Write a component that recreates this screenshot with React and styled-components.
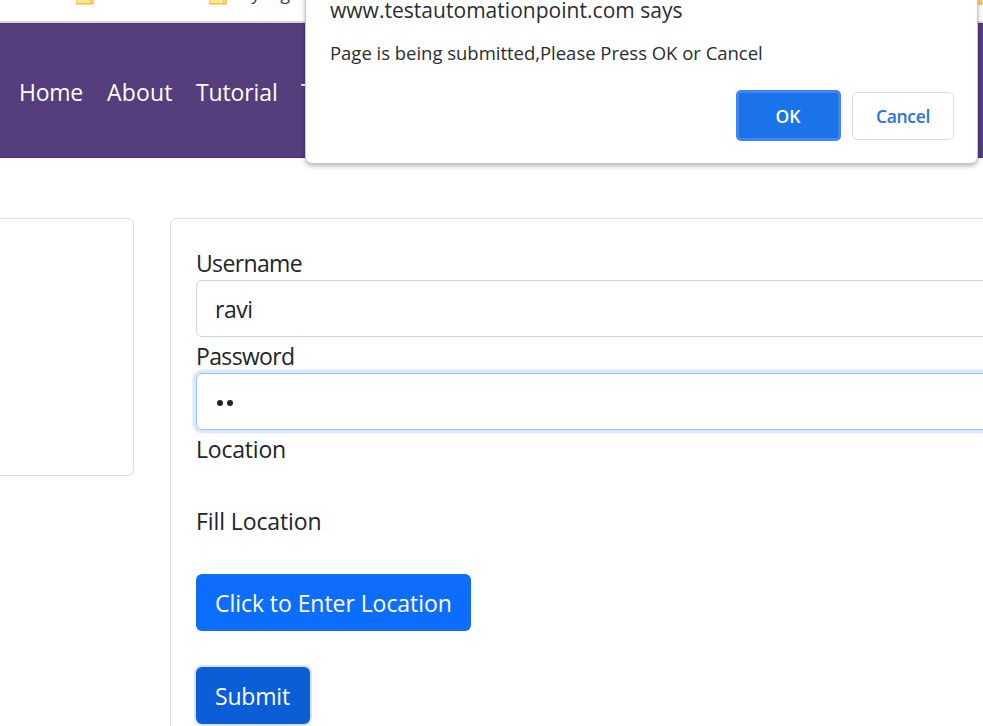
import React from "react";
import styled, { createGlobalStyle } from "styled-components";

const GlobalStyle = createGlobalStyle`
  *, *::before, *::after { box-sizing: border-box; }
  body {
    margin: 0;
    overflow: hidden;
    background: #fff;
    color: #212529;
    font: 400 23px/36px "Open Sans", "Noto Sans", sans-serif;
    font-variant-ligatures: none;
  }
`;

const Screen = styled.div`
  position: relative;
  width: 983px;
  height: 726px;
  overflow: hidden;
`;

const BookmarksBar = styled.div`
  display: flex;
  align-items: flex-start;
  height: 23px;
  padding-left: 76px;
  overflow: hidden;
  border-bottom: 2px solid #dadadc;
`;

const Folder = styled.svg`
  flex: none;
  width: 18px;
  height: 5px;
  margin-right: ${(p) => p.$gap || 0}px;
`;

const BookmarkLabel = styled.span`
  width: 743px;
  margin-top: -18px;
  font-size: 18px;
  line-height: 22px;
  color: #3c4043;
`;

const Navbar = styled.nav`
  display: flex;
  align-items: center;
  height: 135px;
  padding: 3px 0 0 19px;
  background: #563d7c;
  border-top: 1px solid #4c3570;
  border-bottom: 1px solid #493069;
`;

const NavLink = styled.a`
  flex: none;
  width: ${(p) => p.$width}px;
  padding-bottom: 1px;
  color: #fff;
  letter-spacing: ${(p) => p.$track || 0}px;
`;

const Content = styled.main`
  display: flex;
  align-items: flex-start;
  gap: 36px;
  padding-top: 60px;
`;

const SideCard = styled.aside`
  flex: none;
  width: 142px;
  height: 258px;
  margin-left: -8px;
  border: 1px solid #dfdfdf;
  border-radius: 6px;
`;

const FormCard = styled.form`
  display: flex;
  flex: none;
  flex-direction: column;
  align-items: flex-start;
  width: 900px;
  height: 600px;
  padding: 25px 25px 0;
  border: 1px solid #dfdfdf;
  border-radius: 6px;
`;

const Label = styled.label`
  height: 36px;
  margin-bottom: ${(p) => p.$below || 0}px;
  padding-top: 1px;
  letter-spacing: ${(p) => p.$track || 0}px;
`;

const Field = styled.div`
  display: flex;
  align-items: center;
  width: 100%;
  height: 57px;
  padding: 1px 18px 0;
  letter-spacing: ${(p) => p.$track || 0}px;
  border: 1px solid ${(p) => (p.$focused ? "#9fc0f2" : "#ced4da")};
  border-radius: 6px;
  box-shadow: ${(p) => (p.$focused ? "0 0 0 3px #dbe9ff, 0 0 0 4px #edf4ff" : "none")};
`;

const PasswordDots = styled.svg`
  width: 20px;
  height: 10px;
  margin-top: 1px;
  fill: #212529;
`;

const Button = styled.button`
  width: ${(p) => p.$width}px;
  height: 57px;
  margin-bottom: 36px;
  padding: 1px 0 0 19px;
  border: 0;
  border-radius: 6px;
  background: ${(p) => (p.$active ? "#0b5ed7" : "#0d6efd")};
  box-shadow: ${(p) => (p.$active ? "0 0 0 2px #d5e4fb" : "none")};
  color: #fff;
  font: inherit;
  text-align: left;
  white-space: nowrap;
  letter-spacing: ${(p) => p.$track || 0}px;
`;

const Dialog = styled.section`
  position: absolute;
  top: -20px;
  left: 305px;
  width: 673px;
  height: 184px;
  padding: 15px 24px 0;
  background: #fff;
  border: 1px solid #c6c8c9;
  border-radius: 7px;
  box-shadow: 0 2px 5px rgba(0, 0, 0, 0.28);
  color: #2b2d30;
`;

const DialogTitle = styled.h1`
  margin: 0;
  font-size: 21px;
  font-weight: 400;
  line-height: 28px;
  white-space: nowrap;
  letter-spacing: 0.03px;
`;

const DialogMessage = styled.p`
  margin: 15px 0 0;
  font-size: 18.5px;
  line-height: 28px;
  white-space: nowrap;
  letter-spacing: -0.02px;
`;

const DialogActions = styled.div`
  display: flex;
  align-items: center;
  justify-content: flex-end;
  gap: 11px;
  margin-top: 23px;
  margin-right: -1px;
`;

const DialogButton = styled.button`
  width: ${(p) => (p.$primary ? 105 : 102)}px;
  height: ${(p) => (p.$primary ? 51 : 48)}px;
  padding: ${(p) => (p.$primary ? "1px 1px 0 0" : "1px 0 0")};
  border: ${(p) => (p.$primary ? "3px solid #4285f4" : "1px solid #dadce0")};
  border-radius: 5px;
  background: ${(p) => (p.$primary ? "#1a73e8" : "#fff")};
  color: ${(p) => (p.$primary ? "#fff" : "#2a70e3")};
  font: 600 17.5px/24px "Open Sans", "Noto Sans", sans-serif;
  letter-spacing: ${(p) => p.$track || 0}px;
`;

function FolderIcon({ gap }) {
  return (
    <Folder $gap={gap} viewBox="0 0 18 5">
      <path d="M0 0H18V4.2Q18 5 17 5H1Q0 5 0 4.2Z" fill="#fbdc74" />
      <path d="M2 0H14V3H2Z" fill="#ffe694" />
      <path d="M0 3.5H18M14.5 0V3.5M16.5 0V3.5" stroke="#edc443" strokeWidth="0.9" />
    </Folder>
  );
}

export default function App() {
  return (
    <>
      <GlobalStyle />
      <Screen>
        <BookmarksBar>
          <FolderIcon gap={115} />
          <FolderIcon gap={8} />
          <BookmarkLabel>My log</BookmarkLabel>
          <FolderIcon />
        </BookmarksBar>
        <Navbar>
          <NavLink $width={88} $track={-0.25}>Home</NavLink>
          <NavLink $width={89} $track={0.2}>About</NavLink>
          <NavLink $width={105} $track={-0.12}>Tutorial</NavLink>
          <NavLink $width={90}>Training</NavLink>
        </Navbar>
        <Content>
          <SideCard />
          <FormCard>
            <Label $track={-0.65}>Username</Label>
            <Field $track={-0.5}>ravi</Field>
            <Label $track={-0.65}>Password</Label>
            <Field $focused>
              <PasswordDots viewBox="0 0 20 10">
                <circle cx="5" cy="5" r="3" />
                <circle cx="15" cy="5" r="3" />
              </PasswordDots>
            </Field>
            <Label $below={36} $track={-0.2}>Location</Label>
            <Label $below={36} $track={-0.1}>Fill Location</Label>
            <Button type="button" $width={275} $track={-0.06}>Click to Enter Location</Button>
            <Button type="button" $width={114} $track={-0.2} $active>Submit</Button>
          </FormCard>
        </Content>
        <Dialog>
          <DialogTitle>www.testautomationpoint.com says</DialogTitle>
          <DialogMessage>Page is being submitted,Please Press OK or Cancel</DialogMessage>
          <DialogActions>
            <DialogButton $primary>OK</DialogButton>
            <DialogButton $track={-0.3}>Cancel</DialogButton>
          </DialogActions>
        </Dialog>
      </Screen>
    </>
  );
}
